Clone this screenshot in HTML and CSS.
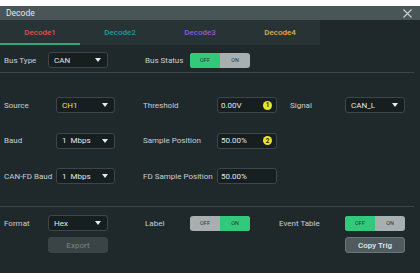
FILE: index.html
```html
<!DOCTYPE html>
<html>
<head>
<meta charset="utf-8">
<link rel="stylesheet" href="styles.css">
</head>
<body>
<div class="panel">
  <div class="titlebar">
    <span class="title">Decode</span>
    <svg class="close" width="9" height="9" viewBox="0 0 9 9"><path d="M0.5 0.5L8.5 8.5M8.5 0.5L0.5 8.5" stroke="#c9cfd1" stroke-width="1.1"/></svg>
  </div>
  <div class="tabs">
    <div class="tab tab1 active">Decode1</div>
    <div class="tab tab2">Decode2</div>
    <div class="tab tab3">Decode3</div>
    <div class="tab tab4">Decode4</div>
  </div>

  <div class="section top">
    <div class="grid grid-top">
      <span class="label">Bus Type</span>
      <div class="select"><span>CAN</span><i class="caret"></i></div>
      <span></span>
      <span class="label">Bus Status</span>
      <div class="toggle off"><span class="on-part">OFF</span><span>ON</span></div>
    </div>
  </div>

  <div class="section mid">
    <div class="grid grid-mid">
      <span class="label">Source</span>
      <div class="select"><span class="ch1">CH1</span><i class="caret"></i></div>
      <span></span>
      <span class="label">Threshold</span>
      <div class="input"><span>0.00V</span><i class="badge">1</i></div>
      <span></span>
      <span class="label">Signal</span>
      <div class="select"><span>CAN_L</span><i class="caret"></i></div>

      <span class="label">Baud</span>
      <div class="select"><span>1 &nbsp;Mbps</span><i class="caret"></i></div>
      <span></span>
      <span class="label">Sample Position</span>
      <div class="input"><span>50.00%</span><i class="badge">2</i></div>
      <span></span><span></span><span></span>

      <span class="label">CAN-FD Baud</span>
      <div class="select"><span>1 &nbsp;Mbps</span><i class="caret"></i></div>
      <span></span>
      <span class="label">FD Sample Position</span>
      <div class="input"><span>50.00%</span></div>
      <span></span><span></span><span></span>
    </div>
  </div>

  <div class="section bottom">
    <div class="grid grid-bot">
      <span class="label">Format</span>
      <div class="select"><span>Hex</span><i class="caret"></i></div>
      <span></span>
      <span class="label">Label</span>
      <div class="toggle on"><span>OFF</span><span class="on-part">ON</span></div>
      <span></span>
      <span class="label">Event Table</span>
      <div class="toggle off"><span class="on-part">OFF</span><span>ON</span></div>

      <span></span>
      <div class="btn disabled">Export</div>
      <span></span><span></span><span></span><span></span><span></span>
      <div class="btn">Copy Trig</div>
    </div>
  </div>
</div>
</body>
</html>
```
FILE: styles.css
```css
* { box-sizing: border-box; }
body {
  margin: 0;
  background: #ffffff;
  font-family: Roboto, "Liberation Sans", sans-serif;
  font-size: 8px;
  color: #c9cfd2;
}
.panel {
  margin-top: 6px;
  height: 267px;
  background: #1f292c;
  display: flex;
  flex-direction: column;
}
.titlebar {
  height: 14px;
  background: #4a5558;
  display: flex;
  align-items: center;
  justify-content: space-between;
  padding: 0 8px 0 6px;
}
.title { color: #e3e7e8; font-size: 8.5px; }
.tabs {
  height: 25px;
  display: flex;
}
.tab {
  width: 80px;
  background: #283336;
  display: flex;
  align-items: center;
  justify-content: center;
  font-weight: 500;
  font-size: 8px;
  border-bottom: 2px solid transparent;
  padding-top: 2px;
}
.tab.active { border-bottom-color: #2ea876; }
.tab1 { color: #e0514c; }
.tab2 { color: #1f9f9c; }
.tab3 { color: #9257d9; }
.tab4 { color: #e5ac55; }

.section { padding-left: 4px; }
.top {
  padding-top: 7px;
  padding-bottom: 4px;
  border-bottom: 1px solid #3a4548;
  margin-right: 6px;
}
.mid {
  padding-top: 24px;
  height: 134px;
  border-bottom: 1px solid #3a4548;
  margin-right: 6px;
}
.bottom { padding-top: 8px; }

.grid { display: grid; align-items: center; }
.grid-top { grid-template-columns: 44px 60px 37px 45px 60px; }
.grid-mid {
  grid-template-columns: 52px 59px 28px 74px 60px 13px 55px 60px;
  row-gap: 19.5px;
}
.grid-bot {
  grid-template-columns: 44px 60px 37px 45px 60px 29px 66px 60px;
  row-gap: 6px;
}
.label { white-space: nowrap; }

.select, .input {
  height: 16px;
  background: #161e20;
  border: 1px solid #3d474a;
  border-radius: 3px;
  display: flex;
  align-items: center;
  justify-content: space-between;
  padding: 0 6px 0 5px;
  color: #e3e7e8;
}
.input { padding: 0 3px 0 3px; }
.ch1 { color: #e9e74a; }
.caret {
  width: 0; height: 0;
  border-left: 3.5px solid transparent;
  border-right: 3.5px solid transparent;
  border-top: 4px solid #e6eaeb;
}
.badge {
  width: 9px; height: 9px;
  border-radius: 50%;
  background: #ece52a;
  color: #2a2a10;
  font-style: normal;
  font-weight: 700;
  font-size: 6.5px;
  display: flex;
  align-items: center;
  justify-content: center;
  margin-right: 1px;
}

.toggle {
  height: 15px;
  display: flex;
  border-radius: 3px;
  overflow: hidden;
  background: #a8afb1;
  font-size: 5.5px;
  color: #2f3537;
}
.toggle span {
  flex: 1;
  display: flex;
  align-items: center;
  justify-content: center;
}
.toggle .on-part { background: #33c97b; }

.btn {
  height: 16px;
  border-radius: 3px;
  background: #4f5b5e;
  border: 1px solid #6a7578;
  color: #e6eaeb;
  display: flex;
  align-items: center;
  justify-content: center;
  font-weight: 500;
}
.btn.disabled {
  background: #3a4447;
  border-color: #3a4447;
  color: #6d7779;
}
```
